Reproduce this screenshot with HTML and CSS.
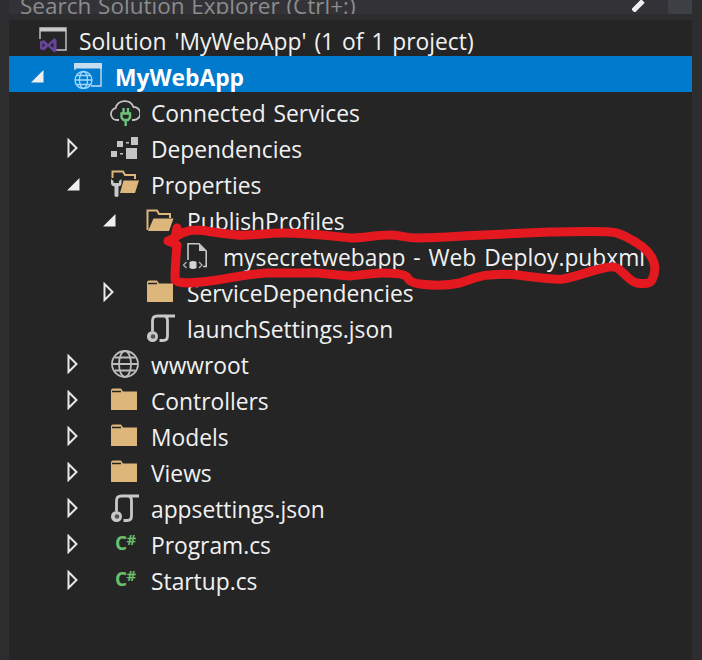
FILE: index.html
```html
<!DOCTYPE html>
<html lang="en">
<head>
<meta charset="utf-8">
<title>Solution Explorer</title>
<link rel="stylesheet" href="styles.css">
</head>
<body>
<svg class="defs" width="0" height="0" aria-hidden="true">
  <defs>
    <symbol id="i-right" viewBox="0 0 12 20"><path d="M2.500 2 L10.500 10 L2.500 18 Z" fill="none" stroke="#e8e8e8" stroke-width="2"/></symbol>
    <symbol id="i-down" viewBox="0 0 14 14"><path d="M13.500 1 V13.500 H1 Z" fill="#efefef"/></symbol>
    <symbol id="i-folder" viewBox="0 1 28 24"><path d="M1 3.500 Q1 1.500 3 1.500 H11 L13 4.500 H27 V23 H1 Z" fill="#dcb67a"/><path d="M2 4.500 H11" stroke="#252526" stroke-width="1.500"/></symbol>
    <symbol id="i-open" viewBox="0 0 28 24"><path d="M1.500 22 V2.500 H11 L13 6 H24 V10" fill="none" stroke="#dcb67a" stroke-width="2"/><path d="M2 23 L7.500 10.500 H27.500 L23 23 Z" fill="#dcb67a"/></symbol>
    <symbol id="i-json" viewBox="0 0 30 30"><path d="M29 3 H11.500 Q6.500 3 6.500 8 V18 M18 3 Q21.500 3 21.500 8 V23 Q21.500 27.500 17 27.500 H13.500" fill="none" stroke="#c8c8c8" stroke-width="2.800"/><circle cx="6.500" cy="23.500" r="5.500" fill="#c8c8c8"/><circle cx="7" cy="23.500" r="2.300" fill="#555"/></symbol>
    <symbol id="i-csharp" viewBox="0 0 24 16"><text x="0" y="15.500" class="cs-c">C</text><text x="11.500" y="11" class="cs-h">#</text></symbol>
  </defs>
</svg>
<div class="window">
  <div class="search">
    <div class="search-box"><span class="search-text">Search Solution Explorer (Ctrl+;)</span><svg class="search-glass" width="14" height="14" viewBox="0 0 14 14"><path d="M1 13 L11 3" stroke="#f0f0f0" stroke-width="5"/></svg></div>
    <div class="search-btn"></div>
  </div>
  <div class="tree">
    <div class="row l0">
      <span class="arrow"></span>
      <span class="icon"><svg width="28" height="26" viewBox="0 0 28 26"><path d="M1 12 V1 H27 V23 H17" fill="none" stroke="#c8c8c8" stroke-width="1.400"/><rect x="1" y="1" width="26" height="3.500" fill="#c8c8c8"/><path d="M1 14.500 L5 13 L9 17 L15.500 11 L17.500 13 V24 L15.500 25.500 L9 19.500 L5 23.500 L1 22 Z M3.500 16 V20.500 L6 18.300 Z M11 18.300 L14.500 21 V15.500 Z" fill="#68449a" fill-rule="evenodd"/></svg></span>
      <span class="label">Solution 'MyWebApp' (1 of 1 project)</span>
    </div>
    <div class="row l1 selected">
      <span class="arrow"><svg width="14" height="14"><use href="#i-down"/></svg></span>
      <span class="icon"><svg width="28" height="26" viewBox="0 0 28 26"><path d="M17 23 H27 V1 H1 V7" fill="none" stroke="#c8dcf0" stroke-width="1.400"/><rect x="0" y="0" width="28" height="5.500" fill="#c8dcf0"/><g fill="none" stroke="#a5d8ff" stroke-width="1.300"><circle cx="9.500" cy="17" r="8.500"/><ellipse cx="9.500" cy="17" rx="4" ry="8.500"/><path d="M1 17 H18 M2.500 12.500 H16.500 M2.500 21.500 H16.500"/></g></svg></span>
      <span class="label strong">MyWebApp</span>
    </div>
    <div class="row l2">
      <span class="arrow"></span>
      <span class="icon"><svg width="30" height="30" viewBox="0 0 30 30"><path d="M9 23 H7 A6 6 0 0 1 5.500 11.200 A9.500 9.500 0 0 1 23.500 10 A6.500 6.500 0 0 1 24 23 H22" fill="none" stroke="#c4c4c4" stroke-width="1.800"/><path d="M11.500 16.500 H20 V20.500 L18 23 H13.500 L11.500 20.500 Z M13.500 11 V16.500 M18 11 V16.500" fill="none" stroke="#6fc47c" stroke-width="2.400"/><rect x="14.500" y="23" width="2.400" height="6" fill="#6fc47c"/></svg></span>
      <span class="label">Connected Services</span>
    </div>
    <div class="row l2">
      <span class="arrow"><svg width="12" height="20"><use href="#i-right"/></svg></span>
      <span class="icon"><svg width="28" height="24" viewBox="-1 0 28 24"><g fill="#c4c4c4"><rect x="6" y="5" width="6" height="6"/><rect x="20" y="1" width="8" height="8"/><rect x="15" y="6" width="3" height="1.500"/><rect x="0" y="15" width="6" height="6"/><rect x="9" y="17" width="3" height="1.500"/><rect x="15" y="12" width="11" height="11"/></g></svg></span>
      <span class="label">Dependencies</span>
    </div>
    <div class="row l2">
      <span class="arrow"><svg width="14" height="14"><use href="#i-down"/></svg></span>
      <span class="icon"><svg width="30" height="28" viewBox="0 0 30 28"><path d="M2.500 8 V1.500 H13 L15 5 H25 V9" fill="none" stroke="#dcb67a" stroke-width="2"/><path d="M10 23 L13.500 10.500 H29 L25 23 Z" fill="#dcb67a"/><path d="M1 9 V13 Q1 16 4.500 16.500 V26 Q6.500 28 8.500 26 V16.500 Q11.500 16 11.500 13 V9 L9 11 V13 H3.500 V11 Z" fill="#c8c8c8"/></svg></span>
      <span class="label">Properties</span>
    </div>
    <div class="row l3">
      <span class="arrow"><svg width="14" height="14"><use href="#i-down"/></svg></span>
      <span class="icon"><svg width="28" height="24"><use href="#i-open"/></svg></span>
      <span class="label">PublishProfiles</span>
    </div>
    <div class="row l4">
      <span class="arrow"></span>
      <span class="icon"><svg width="28" height="28" viewBox="0 0 28 28"><path d="M6 18 V1.800 H17 L24.200 9 V24.500 H21" fill="none" stroke="#c8c8c8" stroke-width="1.600"/><path d="M17 1.800 V9 H24.200 Z" fill="#c8c8c8"/><path d="M7.500 20 Q11 18 14.500 20 V26 Q11 28 7.500 26 Z" fill="#d4d4d4"/><path d="M4.500 20 L1.500 23 L4.500 26 M17 20 L20 23 L17 26" fill="none" stroke="#b0b0b0" stroke-width="1.300"/></svg></span>
      <span class="label">mysecretwebapp - Web Deploy.pubxml</span>
    </div>
    <div class="row l3">
      <span class="arrow"><svg width="12" height="20"><use href="#i-right"/></svg></span>
      <span class="icon"><svg width="28" height="24"><use href="#i-folder"/></svg></span>
      <span class="label">ServiceDependencies</span>
    </div>
    <div class="row l3">
      <span class="arrow"></span>
      <span class="icon"><svg width="30" height="30"><use href="#i-json"/></svg></span>
      <span class="label">launchSettings.json</span>
    </div>
    <div class="row l2">
      <span class="arrow"><svg width="12" height="20"><use href="#i-right"/></svg></span>
      <span class="icon"><svg width="29" height="28" viewBox="-1 0 29 28"><g fill="none" stroke="#bdbdbd" stroke-width="1.800"><circle cx="14" cy="14" r="13"/><ellipse cx="14" cy="14" rx="6" ry="13"/><path d="M1 14 H27 M3.500 7.500 H24.500 M3.500 20.500 H24.500"/></g></svg></span>
      <span class="label">wwwroot</span>
    </div>
    <div class="row l2">
      <span class="arrow"><svg width="12" height="20"><use href="#i-right"/></svg></span>
      <span class="icon"><svg width="28" height="24"><use href="#i-folder"/></svg></span>
      <span class="label">Controllers</span>
    </div>
    <div class="row l2">
      <span class="arrow"><svg width="12" height="20"><use href="#i-right"/></svg></span>
      <span class="icon"><svg width="28" height="24"><use href="#i-folder"/></svg></span>
      <span class="label">Models</span>
    </div>
    <div class="row l2">
      <span class="arrow"><svg width="12" height="20"><use href="#i-right"/></svg></span>
      <span class="icon"><svg width="28" height="24"><use href="#i-folder"/></svg></span>
      <span class="label">Views</span>
    </div>
    <div class="row l2">
      <span class="arrow"><svg width="12" height="20"><use href="#i-right"/></svg></span>
      <span class="icon"><svg width="30" height="30"><use href="#i-json"/></svg></span>
      <span class="label">appsettings.json</span>
    </div>
    <div class="row l2">
      <span class="arrow"><svg width="12" height="20"><use href="#i-right"/></svg></span>
      <span class="icon icon-cs"><svg width="24" height="16"><use href="#i-csharp"/></svg></span>
      <span class="label">Program.cs</span>
    </div>
    <div class="row l2">
      <span class="arrow"><svg width="12" height="20"><use href="#i-right"/></svg></span>
      <span class="icon icon-cs"><svg width="24" height="16"><use href="#i-csharp"/></svg></span>
      <span class="label">Startup.cs</span>
    </div>
  </div>
  <svg class="scribble" width="702" height="660" viewBox="0 0 702 660" aria-hidden="true">
    <path d="M177 228 L175 238 L168 241 L177 245 C176 255 175 270 175 280 C180 284 190 284 217 280 C235 277 250 274 267 273 L317 273 L350 276 C362 275 372 273 383 273 C395 273 405 274 407 277 C409 281 412 283 420 284 C435 286 450 285 460 283 C472 279 480 275 490 275 C500 274 508 274 517 275 C535 277 550 280 563 279 C575 277 590 271 600 269 C608 267 614 266 617 268 C625 273 630 282 637 283 C643 284 650 284 652 280 C656 272 656 265 652 258 C648 250 642 246 637 243 C628 238 620 232 610 232 C590 231 570 232 550 232 C525 233 505 234 483 235 C460 236 440 238 417 238 C405 238 400 235 390 235 C375 235 365 238 350 238 C330 236 310 233 283 233 C265 233 250 236 237 235 C222 234 210 231 197 230 C188 230 180 232 172 240" fill="none" stroke="#e3191f" stroke-width="9" stroke-linecap="round" stroke-linejoin="round"/>
  </svg>
</div>
</body>
</html>
```
FILE: styles.css
```css
* { box-sizing: border-box; }
html, body { margin: 0; padding: 0; }
body { background: #2d2d30; font-family: "Open Sans", "Noto Sans", sans-serif; }
.defs { position: absolute; }
.window {
  position: relative;
  width: 702px;
  height: 660px;
  overflow: hidden;
  background: #2d2d30;
  display: flex;
  flex-direction: column;
  padding: 0 10px 0 9px;
}
.search { display: flex; height: 14px; flex: none; overflow: hidden; }
.search-box {
  flex: 1;
  background: #333337;
  display: flex;
  justify-content: space-between;
  overflow: hidden;
  padding: 0 22px 0 11px;
  align-items: flex-end;
}
.search-text { color: #8c8c8c; font-size: 22.500px; word-spacing: 1px; line-height: 30px; margin-bottom: -7px; white-space: nowrap; }
.search-glass { margin-bottom: 2px; }
.search-btn { width: 24px; background: #3f3f46; }
.tree {
  flex: 1;
  margin-top: 6px;
  background: #252526;
  display: flex;
  flex-direction: column;
}
.row { display: flex; align-items: center; height: 36px; padding-top: 4px; flex: none; color: #f1f1f1; }
.row.l1 { padding-left: 21px; }
.row.l2 { padding-left: 57px; }
.row.l3 { padding-left: 93px; }
.row.l4 { padding-left: 129px; }
.row.selected { background: #007acc; color: #fff; }
.arrow { width: 44px; flex: none; display: flex; align-items: center; }
.row.l0 .arrow { width: 30px; }
.icon { width: 41px; flex: none; display: flex; align-items: center; }
.icon-cs { padding-left: 5px; position: relative; top: -2px; }
.row.l0 .icon { width: 40px; }
.label { font-size: 22.800px; word-spacing: 2px; line-height: 32px; padding-top: 4px; white-space: nowrap; }
.label.strong { font-weight: 700; }
.cs-c { font: 700 19px "Open Sans", sans-serif; fill: #6abf69; }
.cs-h { font: 700 15px "Open Sans", sans-serif; fill: #6abf69; }
.scribble { position: absolute; left: 0; top: 0; pointer-events: none; }
```
